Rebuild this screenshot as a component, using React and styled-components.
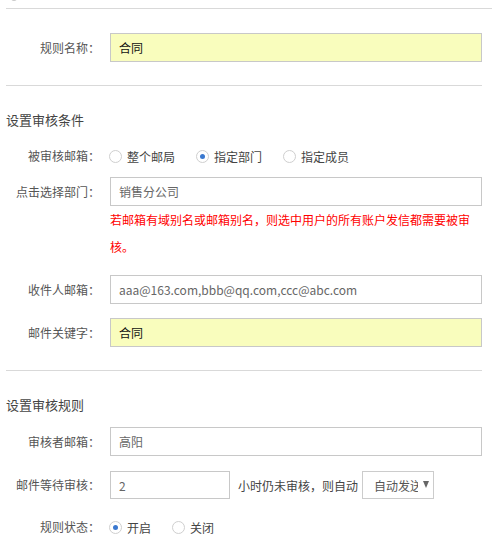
import React from 'react';
import styled, { createGlobalStyle } from 'styled-components';

const GlobalStyle = createGlobalStyle`
  html, body {
    margin: 0;
    padding: 0;
    background: #fff;
    font-family: "Noto Sans CJK SC", "Open Sans", sans-serif;
    font-size: 12px;
    color: #555;
  }
`;

const Page = styled.div`
  position: relative;
  width: 492px;
  height: 558px;
  overflow: hidden;
  padding-left: 6px;
  box-sizing: border-box;
`;

const TopPeek = styled.span`
  position: absolute;
  left: 10px;
  top: -8px;
  width: 8px;
  height: 9px;
  border-radius: 50%;
  background: #c9c9c9;
`;

const Divider = styled.div`
  height: 1px;
  background: #d9d9d9;
  margin-top: ${p => p.$top}px;
  width: ${p => (p.$full ? '486px' : '476px')};
`;

const SectionTitle = styled.div`
  margin-top: ${p => p.$top}px;
  height: 20px;
  line-height: 20px;
  font-size: 13px;
  color: #444;
`;

const Row = styled.div`
  display: flex;
  align-items: center;
  width: 476px;
  margin-top: ${p => p.$top || 0}px;
  min-height: 20px;
`;

const Label = styled.label`
  flex: 0 0 94px;
  text-align: right;
  color: #555;
  line-height: 20px;
  margin-right: 10px;
  white-space: nowrap;
`;

const TextInput = styled.input`
  box-sizing: border-box;
  height: ${p => p.$h || 29}px;
  width: ${p => (p.$w ? `${p.$w}px` : 'auto')};
  flex: ${p => (p.$w ? '0 0 auto' : '1 1 auto')};
  border: 1px solid #c8c8c8;
  background: ${p => (p.$hl ? '#f9fdbd' : '#fff')};
  color: ${p => (p.$hl ? '#111' : '#666')};
  font-family: "Noto Sans CJK SC", "Open Sans", sans-serif;
  font-size: 12px;
  padding: 0 0 0 8px;
  margin: 0;
  outline: none;
  border-radius: 0;
`;

const Note = styled.div`
  margin-left: 104px;
  width: 362px;
  color: #f00;
  line-height: 27px;
  font-size: 12px;
`;

const RadioGroup = styled.div`
  display: flex;
  align-items: center;
  gap: ${p => p.$gap}px;
  margin-left: -1px;
`;

const RadioItem = styled.span`
  display: inline-flex;
  align-items: center;
  gap: 5px;
  color: #444;
`;

const RadioCircle = styled.span`
  position: relative;
  width: 13px;
  height: 13px;
  box-sizing: border-box;
  border: 1px solid #cfcfcf;
  border-radius: 50%;
  background: #fff;
  &::after {
    content: '';
    display: ${p => (p.$on ? 'block' : 'none')};
    position: absolute;
    left: 3px;
    top: 3px;
    width: 5px;
    height: 5px;
    border-radius: 50%;
    background: #3a78cf;
  }
`;

const Inline = styled.span`
  color: #444;
  margin: 0 4px 0 8px;
  white-space: nowrap;
`;

const Select = styled.div`
  box-sizing: border-box;
  width: 72px;
  height: 28px;
  border: 1px solid #ccc;
  display: flex;
  align-items: center;
  padding-left: 11px;
  color: #555;
`;

const SelectText = styled.span`
  width: 44px;
  overflow: hidden;
  white-space: nowrap;
`;

const Caret = styled.span`
  margin-left: 5px;
  width: 0;
  height: 0;
  border-left: 3.5px solid transparent;
  border-right: 3.5px solid transparent;
  border-top: 7px solid #666;
  margin-top: -2px;
`;

function Radio({ on, children }) {
  return (
    <RadioItem>
      <RadioCircle $on={on} />
      {children}
    </RadioItem>
  );
}

export default function App() {
  return (
    <>
      <GlobalStyle />
      <Page>
        <TopPeek />
        <Divider $top={8} $full />

        <Row $top={24}>
          <Label>规则名称：</Label>
          <TextInput $hl readOnly value="合同" />
        </Row>

        <Divider $top={23} />

        <SectionTitle $top={24}>设置审核条件</SectionTitle>

        <Row $top={16}>
          <Label>被审核邮箱：</Label>
          <RadioGroup $gap={21}>
            <Radio>整个邮局</Radio>
            <Radio on>指定部门</Radio>
            <Radio>指定成员</Radio>
          </RadioGroup>
        </Row>

        <Row $top={11}>
          <Label>点击选择部门：</Label>
          <TextInput readOnly value="销售分公司" />
        </Row>
        <Note>若邮箱有域别名或邮箱别名，则选中用户的所有账户发信都需要被审核。</Note>

        <Row $top={15}>
          <Label>收件人邮箱：</Label>
          <TextInput readOnly value="aaa@163.com,bbb@qq.com,ccc@abc.com" />
        </Row>

        <Row $top={14}>
          <Label>邮件关键字：</Label>
          <TextInput $hl readOnly value="合同" />
        </Row>

        <Divider $top={23} />

        <SectionTitle $top={24}>设置审核规则</SectionTitle>

        <Row $top={12}>
          <Label>审核者邮箱：</Label>
          <TextInput readOnly value="高阳" />
        </Row>

        <Row $top={15}>
          <Label>邮件等待审核：</Label>
          <TextInput $w={120} $h={28} readOnly value="2" />
          <Inline>小时仍未审核，则自动</Inline>
          <Select>
            <SelectText>自动发送</SelectText>
            <Caret />
          </Select>
        </Row>

        <Row $top={18}>
          <Label>规则状态：</Label>
          <RadioGroup $gap={21}>
            <Radio on>开启</Radio>
            <Radio>关闭</Radio>
          </RadioGroup>
        </Row>
      </Page>
    </>
  );
}
